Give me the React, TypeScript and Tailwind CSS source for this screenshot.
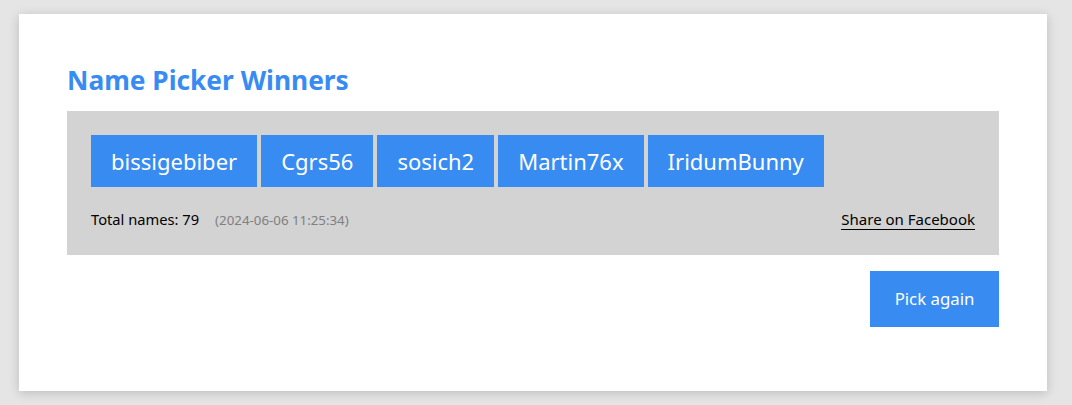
export default function App() {
  const names = ["bissigebiber", "Cgrs56", "sosich2", "Martin76x", "IridumBunny"];

  return (
    <div className="min-h-[405px] bg-[#e5e5e5] pl-[19px] pr-[25px] pt-[14px] pb-[14px] font-['Noto_Sans',sans-serif]">
      <div className="bg-white px-12 pt-[48px] pb-16 shadow-[0_2px_10px_rgba(0,0,0,0.18)]">
        <h2 className="text-[26.3px] font-bold leading-[36px] text-[#388cf1]">Name Picker Winners</h2>

        <div className="mt-[13px] bg-[#d3d3d3] px-6 pt-6 pb-[24px]">
          <div className="flex flex-wrap gap-1">
            {names.map((n) => (
              <span key={n} className="flex h-[52px] items-center bg-[#388cf1] px-5 text-[22px] text-white">
                {n}
              </span>
            ))}
          </div>

          <div className="mt-[21px] flex items-center justify-between">
            <div className="flex items-baseline">
              <span className="text-[14.7px] text-black">Total names: 79</span>
              <span className="ml-[16px] text-[13.3px] text-[#808080]">(2024-06-06 11:25:34)</span>
            </div>
            <a href="#" className="border-b border-black text-[15px] leading-[20px] text-black">
              Share on Facebook
            </a>
          </div>
        </div>

        <div className="mt-4 flex justify-end">
          <button className="h-[56px] w-[129px] bg-[#388cf1] text-[16.8px] text-white">Pick again</button>
        </div>
      </div>
    </div>
  );
}
